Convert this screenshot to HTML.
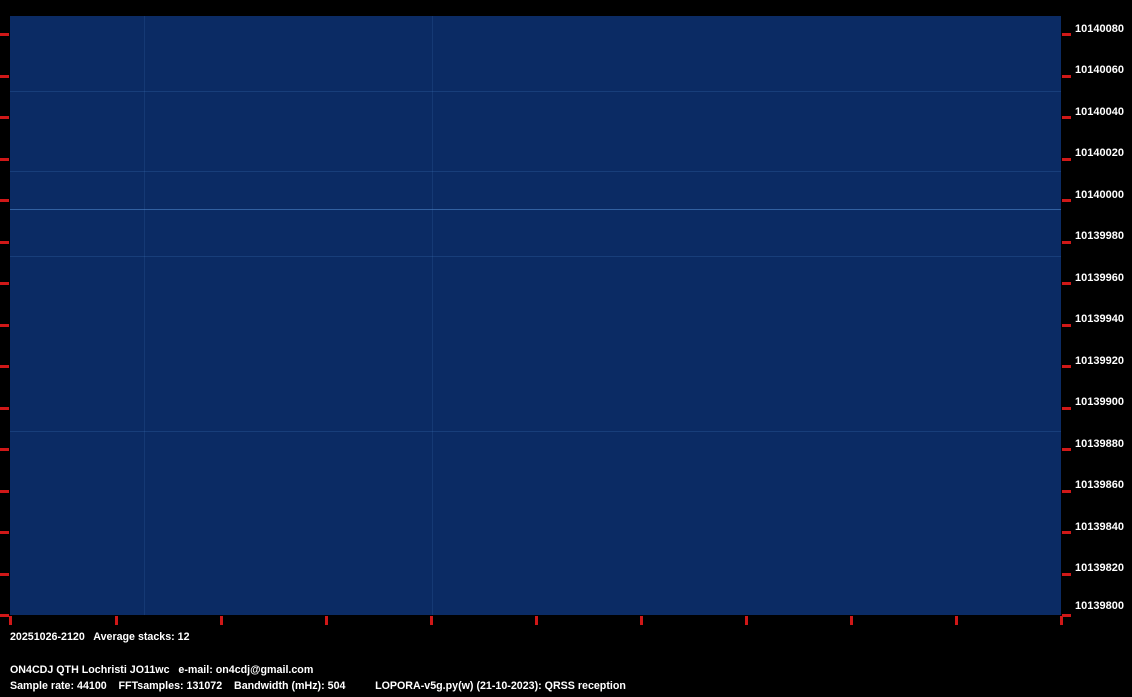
<!DOCTYPE html>
<html><head><meta charset="utf-8"><style>
html,body{margin:0;padding:0;background:#000;width:1132px;height:697px;overflow:hidden;position:relative;font-family:"Liberation Sans",sans-serif;font-weight:bold;color:#fff}
#plot{position:absolute;left:10px;top:16px;width:1051px;height:599px;background:#0b2b64}
.h{position:absolute;left:0;width:100%;height:1px;background:rgba(80,140,210,0.2)}
.v{position:absolute;top:0;height:100%;width:1px;background:rgba(80,140,210,0.15)}
.tl{position:absolute;left:0;width:9px;height:3px;background:#d01818}
.tr{position:absolute;left:1062px;width:9px;height:3px;background:#d01818}
.tb{position:absolute;top:616px;width:3px;height:9px;background:#d01818}
.lab{position:absolute;left:1075px;font-size:11px;line-height:12px}
.t{position:absolute;left:10px;font-size:11px;line-height:12px;white-space:pre;transform:scaleX(0.97);transform-origin:left}
</style></head><body>
<div id="plot">
<div class="h" style="top:193px;background:rgba(90,150,220,0.5)"></div>
<div class="h" style="top:75px"></div>
<div class="h" style="top:155px"></div>
<div class="h" style="top:240px"></div>
<div class="h" style="top:415px"></div>
<div class="v" style="left:134px"></div>
<div class="v" style="left:422px"></div>
</div>
<div class="tl" style="top:33px"></div><div class="tl" style="top:75px"></div><div class="tl" style="top:116px"></div><div class="tl" style="top:158px"></div><div class="tl" style="top:199px"></div><div class="tl" style="top:241px"></div><div class="tl" style="top:282px"></div><div class="tl" style="top:324px"></div><div class="tl" style="top:365px"></div><div class="tl" style="top:407px"></div><div class="tl" style="top:448px"></div><div class="tl" style="top:490px"></div><div class="tl" style="top:531px"></div><div class="tl" style="top:573px"></div><div class="tl" style="top:614px"></div>
<div class="tr" style="top:33px"></div><div class="tr" style="top:75px"></div><div class="tr" style="top:116px"></div><div class="tr" style="top:158px"></div><div class="tr" style="top:199px"></div><div class="tr" style="top:241px"></div><div class="tr" style="top:282px"></div><div class="tr" style="top:324px"></div><div class="tr" style="top:365px"></div><div class="tr" style="top:407px"></div><div class="tr" style="top:448px"></div><div class="tr" style="top:490px"></div><div class="tr" style="top:531px"></div><div class="tr" style="top:573px"></div><div class="tr" style="top:614px"></div>
<div class="tb" style="left:9px"></div><div class="tb" style="left:115px"></div><div class="tb" style="left:220px"></div><div class="tb" style="left:325px"></div><div class="tb" style="left:430px"></div><div class="tb" style="left:535px"></div><div class="tb" style="left:640px"></div><div class="tb" style="left:745px"></div><div class="tb" style="left:850px"></div><div class="tb" style="left:955px"></div><div class="tb" style="left:1060px"></div>
<div class="lab" style="top:23px">10140080</div>
<div class="lab" style="top:64px">10140060</div>
<div class="lab" style="top:106px">10140040</div>
<div class="lab" style="top:147px">10140020</div>
<div class="lab" style="top:189px">10140000</div>
<div class="lab" style="top:230px">10139980</div>
<div class="lab" style="top:272px">10139960</div>
<div class="lab" style="top:313px">10139940</div>
<div class="lab" style="top:355px">10139920</div>
<div class="lab" style="top:396px">10139900</div>
<div class="lab" style="top:438px">10139880</div>
<div class="lab" style="top:479px">10139860</div>
<div class="lab" style="top:521px">10139840</div>
<div class="lab" style="top:562px">10139820</div>
<div class="lab" style="top:600px">10139800</div>
<div class="t" style="top:631px">20251026-2120   Average stacks: 12</div>
<div class="t" style="top:664px">ON4CDJ QTH Lochristi JO11wc   e-mail: on4cdj@gmail.com</div>
<div class="t" style="top:680px">Sample rate: 44100    FFTsamples: 131072    Bandwidth (mHz): 504          LOPORA-v5g.py(w) (21-10-2023): QRSS reception</div>
</body></html>
